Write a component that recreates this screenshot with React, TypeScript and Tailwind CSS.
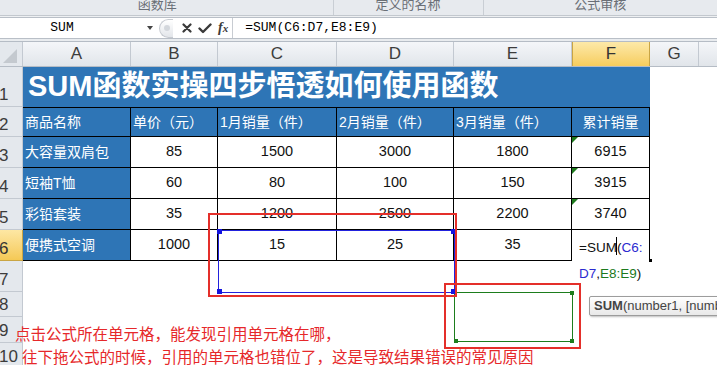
type ColHead = { label: string; width: string; active?: boolean };

type DataRow = { n: number; name: string; vals: string[]; total: string | null };

const colHeads: ColHead[] = [
  { label: "A", width: "w-[108px]" },
  { label: "B", width: "w-[87px]" },
  { label: "C", width: "w-[119px]" },
  { label: "D", width: "w-[117px]" },
  { label: "E", width: "w-[118px]" },
  { label: "F", width: "w-[78px]", active: true },
  { label: "G", width: "w-[49px]" },
];

const valWidths = ["w-[87px]", "w-[119px]", "w-[117px]", "w-[118px]"];

const headers = ["单价（元）", "1月销量（件）", "2月销量（件）", "3月销量（件）"];

const rows: DataRow[] = [
  { n: 3, name: "大容量双肩包", vals: ["85", "1500", "3000", "1800"], total: "6915" },
  { n: 4, name: "短袖T恤", vals: ["60", "80", "100", "150"], total: "3915" },
  { n: 5, name: "彩铅套装", vals: ["35", "1200", "2500", "2200"], total: "3740" },
  { n: 6, name: "便携式空调", vals: ["1000", "15", "25", "35"], total: null },
];

function RowHead({ n, active }: { n: number; active?: boolean }) {
  return (
    <div
      className={`flex w-[23px] shrink-0 items-end overflow-hidden border-r border-b pb-[3px] text-[17px] leading-[17px] ${
        active
          ? "border-[#c9a544] bg-gradient-to-b from-[#fde7a3] to-[#f5c954] text-[#333]"
          : "border-[#c3c9d1] bg-[#e4e8ed] text-[#3c3c3c]"
      }`}
    >
      <span className="-ml-[1px]">{n}</span>
    </div>
  );
}

function ErrorMark() {
  return (
    <span className="absolute left-0 top-0 h-0 w-0 border-t-[6px] border-r-[6px] border-t-[#1e7a1e] border-r-transparent" />
  );
}

function FormulaBar() {
  return (
    <div className="flex h-[22px] items-center border-y border-[#b9bfc7] bg-white">
      <div className="w-[124px] text-center font-['Liberation_Mono',monospace] text-[13px] text-black">SUM</div>
      <span className="ml-[23px] h-0 w-0 border-x-[3px] border-t-[4px] border-x-transparent border-t-[#444]" />
      <div className="ml-[6px] flex h-[19px] w-[14px] items-center justify-center rounded-l-full border-y border-l border-[#c6cad0] bg-gradient-to-b from-white to-[#e3e6ea]">
        <span className="h-[6px] w-[6px] rounded-full bg-[#d3d7dc]" />
      </div>
      <svg className="ml-[9px]" width="10" height="10" viewBox="0 0 10 10">
        <path d="M1.5 1.5 L8.5 8.5 M8.5 1.5 L1.5 8.5" stroke="#3a3a3a" strokeWidth="2.2" strokeLinecap="round" />
      </svg>
      <svg className="ml-[6px]" width="14" height="11" viewBox="0 0 14 11">
        <path d="M1.5 5.5 L5 9 L12.5 1.5" stroke="#3a3a3a" strokeWidth="2.4" fill="none" strokeLinecap="round" strokeLinejoin="round" />
      </svg>
      <span className="ml-[6px] font-['Liberation_Serif',serif] text-[14px] font-bold italic leading-none text-[#3a3a3a]">
        f<span className="text-[11px]">x</span>
      </span>
      <span className="ml-[4px] w-px self-stretch bg-[#c8ccd2]" />
      <span className="ml-[12px] font-['Liberation_Mono',monospace] text-[13px] text-black">=SUM(C6:D7,E8:E9)</span>
    </div>
  );
}

export default function App() {
  return (
    <div className="relative h-[365px] w-[717px] overflow-hidden bg-white font-['Liberation_Sans','Noto_Sans_CJK_SC',sans-serif]">
      {/* ribbon group labels */}
      <div className="flex h-[16px] overflow-hidden border-b border-[#c3c8ce] bg-[#e7eaee] text-[13px] leading-[13px] text-[#6a6f76]">
        <div className="flex w-[380px] justify-center border-r border-[#c9ced4] pr-[18px]">
          <span className="-mt-[2px]">函数库</span>
        </div>
        <div className="flex w-[172px] justify-center border-r border-[#c9ced4]">
          <span className="-mt-[2px]">定义的名称</span>
        </div>
        <div className="flex w-[268px] justify-center">
          <span className="-mt-[2px]">公式审核</span>
        </div>
      </div>
      <div className="h-[1px] bg-[#eef0f2]" />
      <FormulaBar />
      <div className="h-[2px] bg-[#e9ecef]" />

      {/* column headers */}
      <div className="flex h-[26px] border-y border-[#b5bcc5]">
        <div className="relative w-[23px] shrink-0 border-r border-[#c3c9d1] bg-[#e4e8ed]">
          <svg className="absolute bottom-[3px] right-[5px]" width="14" height="14" viewBox="0 0 14 14">
            <path d="M14 0 L14 14 L0 14 Z" fill="#c4c9cf" />
          </svg>
        </div>
        {colHeads.map((c) => (
          <div
            key={c.label}
            className={`${c.width} flex items-center justify-center border-r text-[17px] ${
              c.active
                ? "border-x border-[#c9a544] bg-gradient-to-b from-[#fde9a8] to-[#f6cd5c] text-[#333]"
                : "border-[#c3c9d1] bg-gradient-to-b from-[#f4f6f9] to-[#e1e5ea] text-[#3d3d3d]"
            }`}
          >
            {c.label}
          </div>
        ))}
        <div className="flex-1 bg-gradient-to-b from-[#f4f6f9] to-[#e1e5ea]" />
      </div>

      {/* row 1: title */}
      <div className="flex h-[40px]">
        <RowHead n={1} />
        <div className="flex w-[627px] items-center bg-[#2e75b6] pl-[5px] text-[29px] font-bold text-white">
          SUM函数实操四步悟透如何使用函数
        </div>
        <div className="flex-1" />
      </div>

      {/* row 2: headers */}
      <div className="flex h-[30px]">
        <RowHead n={2} />
        <div className="flex w-[108px] items-center border-y border-r border-black bg-[#2e75b6] pl-[2px] text-[14px] text-white">
          商品名称
        </div>
        {headers.map((h, i) => (
          <div
            key={h}
            className={`${valWidths[i]} flex items-center border-y border-r border-black bg-[#2e75b6] pl-[2px] text-[14px] text-white`}
          >
            {h}
          </div>
        ))}
        <div className="flex w-[78px] items-center justify-center border-y border-r border-black bg-[#2e75b6] text-[14px] text-white">
          累计销量
        </div>
        <div className="flex-1" />
      </div>

      {/* rows 3-6 */}
      {rows.map((r) => (
        <div key={r.n} className="flex h-[31px]">
          <RowHead n={r.n} active={r.n === 6} />
          <div className="flex w-[108px] items-center border-r border-b border-black bg-[#2e75b6] pl-[2px] text-[14px] text-white">
            {r.name}
          </div>
          {r.vals.map((v, i) => (
            <div
              key={i}
              className={`${valWidths[i]} flex items-center justify-center border-r border-b border-black text-[14.5px] text-[#111]`}
            >
              {v}
            </div>
          ))}
          {r.total ? (
            <div className="relative flex w-[78px] items-center justify-center border-r border-b border-black text-[14.5px] text-[#111]">
              <ErrorMark />
              {r.total}
            </div>
          ) : (
            <div className="relative w-[78px] border-r border-black bg-white">
              <div className="whitespace-nowrap pl-[7px] pt-[5px] text-[13.5px] leading-[26px] text-[#111]">
                =SUM<span className="relative inline-block h-[18px] w-0 align-[-3px]"><span className="absolute left-[-1px] top-0 h-[18px] w-px bg-black" /></span>
                (<span className="text-[#2b2bd0]">C6:</span>
                <br />
                <span className="text-[#2b2bd0]">D7</span>,<span className="text-[#1d7a1d]">E8:E9</span>)
              </div>
              <span className="absolute -right-[3px] bottom-[-1px] h-[3px] w-[3px] bg-black" />
            </div>
          )}
          <div className="flex-1" />
        </div>
      ))}

      {/* rows 7-10 */}
      <div className="flex h-[31px]">
        <RowHead n={7} />
        <div className="flex-1" />
      </div>
      <div className="flex h-[25px]">
        <RowHead n={8} />
        <div className="flex-1" />
      </div>
      <div className="flex h-[26px]">
        <RowHead n={9} />
        <div className="flex-1" />
      </div>
      <div className="flex h-[26px]">
        <RowHead n={10} />
        <div className="flex-1" />
      </div>

      {/* referenced range C6:D7 */}
      <div className="absolute left-[218px] top-[230px] h-[63px] w-[237px] border border-[#2222dd]" />
      <span className="absolute left-[217px] top-[229px] h-[5px] w-[5px] bg-[#1414e0]" />
      <span className="absolute left-[217px] top-[289px] h-[5px] w-[5px] bg-[#1414e0]" />
      <span className="absolute left-[451px] top-[229px] h-[5px] w-[5px] bg-[#1414e0]" />

      {/* referenced range E8:E9 */}
      <div className="absolute left-[454px] top-[292px] h-[50px] w-[119px] border border-[#1d7d1d]" />
      <span className="absolute left-[570px] top-[291px] h-[4px] w-[4px] bg-[#1d7d1d]" />
      <span className="absolute left-[454px] top-[339px] h-[4px] w-[4px] bg-[#1d7d1d]" />
      <span className="absolute left-[570px] top-[339px] h-[4px] w-[4px] bg-[#1d7d1d]" />
      <span className="absolute left-[451px] top-[289px] h-[5px] w-[5px] bg-[#1414e0]" />

      {/* annotation boxes */}
      <div className="absolute left-[208px] top-[213px] h-[84px] w-[249px] border-2 border-[#e42f2a]" />
      <div className="absolute left-[444px] top-[283px] h-[66px] w-[137px] border-2 border-[#e42f2a]" />

      {/* function tooltip */}
      <div className="absolute left-[589px] top-[296px] flex h-[20px] w-[150px] items-center whitespace-nowrap rounded-[2px] border border-[#9c9c9c] bg-gradient-to-b from-white to-[#e9e9e9] pl-[4px] text-[13px] text-[#444] shadow-[1px_1px_2px_rgba(0,0,0,0.25)]">
        <b>SUM</b>(number1, [number2], ...)
      </div>

      {/* annotation text */}
      <p className="absolute left-[15px] top-[323px] whitespace-nowrap font-['Noto_Sans_CJK_SC',sans-serif] text-[15.5px] leading-[20px] text-[#e6282a]">
        点击公式所在单元格，能发现引用单元格在哪，
      </p>
      <p className="absolute left-[22px] top-[346px] whitespace-nowrap font-['Noto_Sans_CJK_SC',sans-serif] text-[15.5px] leading-[20px] text-[#e6282a]">
        往下拖公式的时候，引用的单元格也错位了，这是导致结果错误的常见原因
      </p>
    </div>
  );
}
